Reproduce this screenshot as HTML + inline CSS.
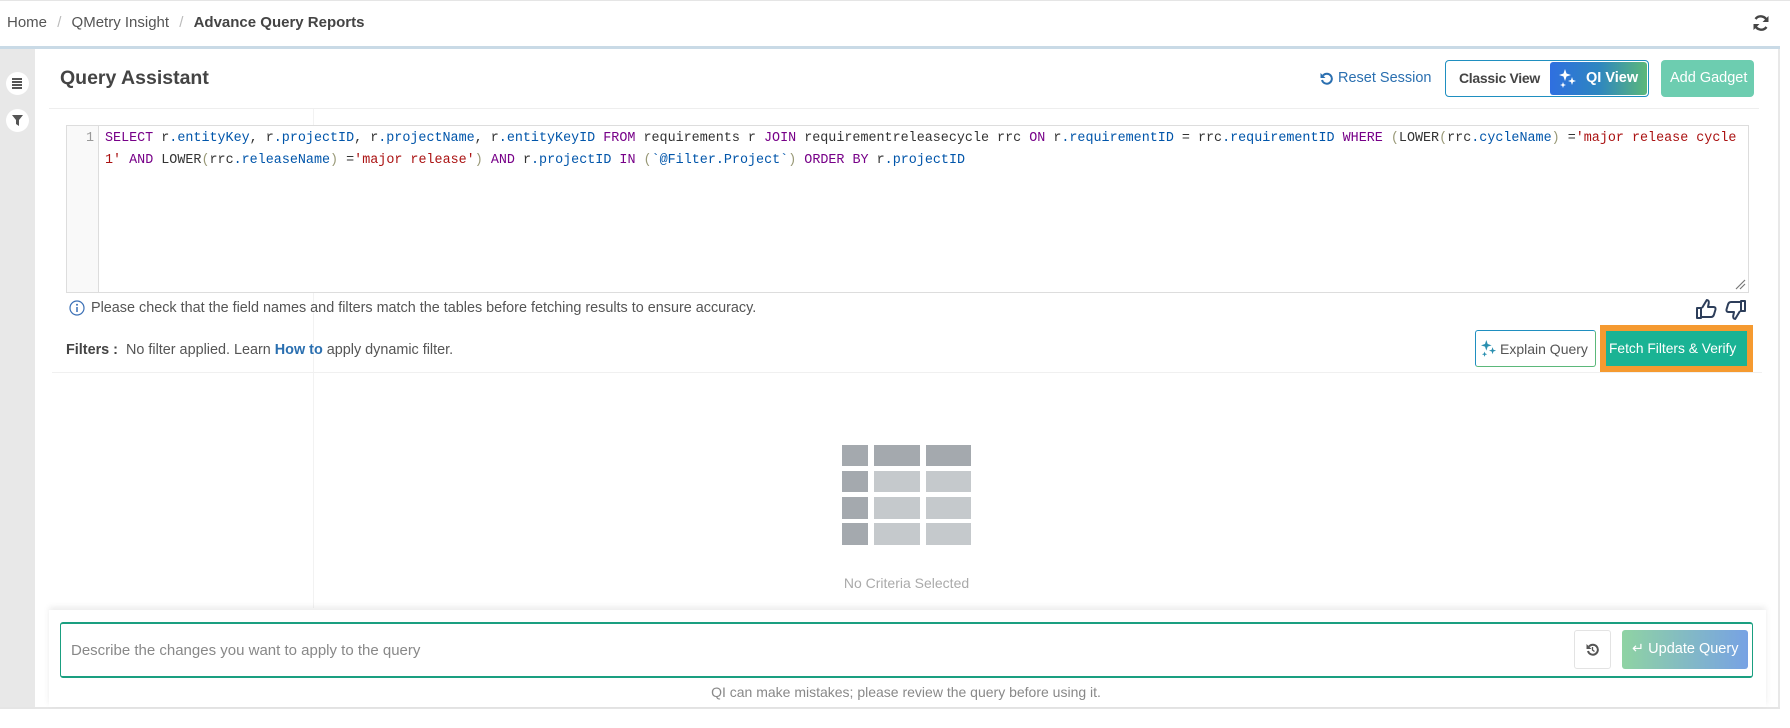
<!DOCTYPE html>
<html><head><meta charset="utf-8"><style>
*{box-sizing:border-box;margin:0;padding:0}
body{width:1790px;height:728px;background:#fff;font-family:"Liberation Sans",sans-serif;position:relative;overflow:hidden;color:#555}
.a{position:absolute}
.code{font-family:"Liberation Mono",monospace;font-size:13.4px;line-height:22px;color:#333;white-space:pre}
.k{color:#770088}.v{color:#0055aa}.s{color:#aa1111}.b{color:#999977}
.txt{font-size:14px;white-space:nowrap}
</style></head><body>
<div class="a" style="left:0;top:0;width:1790px;height:1px;background:#e5e5e5"></div>
<div class="a txt" style="left:7px;top:14px;font-size:15px;color:#555">Home <span style="color:#bbb;margin:0 6px">/</span> QMetry Insight <span style="color:#bbb;margin:0 6px">/</span> <b style="color:#444">Advance Query Reports</b></div>
<svg class="a" style="left:1752px;top:14px" width="18" height="18" viewBox="0 0 18 18"><path d="M15 7A6.5 6.5 0 0 0 3.5 5M3 11a6.5 6.5 0 0 0 11.5 2" fill="none" stroke="#444" stroke-width="2.4"/><path d="M16.5 2v6h-6zM1.5 16v-6h6z" fill="#444"/></svg>
<div class="a" style="left:0;top:46px;width:1780px;height:3px;background:#c9dae6"></div>
<div class="a" style="left:0;top:49px;width:35px;height:659px;background:#e8e8e8"></div>
<div class="a" style="left:6px;top:72px;width:23px;height:23px;border-radius:50%;background:#fff"></div>
<div class="a" style="left:12px;top:78px;width:10px;height:2px;background:#555;box-shadow:0 3px #555,0 6px #555,0 9px #555"></div>
<div class="a" style="left:6px;top:109px;width:23px;height:23px;border-radius:50%;background:#fff"></div>
<svg class="a" style="left:12px;top:115px" width="11" height="11" viewBox="0 0 11 11"><path d="M0 0h11L7 5v6L4 9V5z" fill="#555"/></svg>
<div class="a" style="left:1778px;top:49px;width:2px;height:659px;background:#e8e8e8"></div>
<div class="a" style="left:0;top:707px;width:1780px;height:2px;background:#e5e5e5"></div>
<div class="a" style="left:313px;top:108px;width:1px;height:500px;background:#f2f2f2"></div>
<div class="a" style="left:60px;top:67px;font-size:19.5px;font-weight:bold;color:#444">Query Assistant</div>
<div class="a" style="left:49px;top:108px;width:1710px;height:1px;background:#eee"></div>
<svg class="a" style="left:1320px;top:72px" width="13" height="13" viewBox="0 0 13 13"><path d="M3 3.5A5 5 0 1 1 2 8" fill="none" stroke="#2a6fb0" stroke-width="2"/><path d="M0.5 1v5h5z" fill="#2a6fb0"/></svg>
<div class="a txt" style="left:1338px;top:70px;color:#2a6fb0;font-size:14.5px">Reset Session</div>
<div class="a" style="left:1445px;top:60px;width:204px;height:37px;border:1.5px solid #1f8fc0;border-radius:4px;background:#fff"></div>
<div class="a txt" style="left:1459px;top:70px;color:#444;font-size:14px;font-weight:bold;letter-spacing:-0.3px">Classic View</div>
<div class="a" style="left:1550px;top:62px;width:97px;height:33px;border-radius:3px;background:linear-gradient(90deg,#2f6fe0,#2e86c0 50%,#5bb87a)"></div>
<svg class="a" style="left:1559px;top:68px" width="18" height="20" viewBox="0 0 18 20"><path d="M6 1l1.5 4.5L12 7 7.5 8.5 6 13 4.5 8.5 0 7l4.5-1.5zM13 9l1 3 3 1-3 1-1 3-1-3-3-1 3-1zM4 14l.8 2.2L7 17l-2.2.8L4 20l-.8-2.2L1 17l2.2-.8z" fill="#fff"/></svg>
<div class="a txt" style="left:1586px;top:70px;color:#fff;font-size:14.5px;font-weight:bold">QI View</div>
<div class="a" style="left:1661px;top:60px;width:93px;height:37px;border-radius:4px;background:#6dcdb0"></div>
<div class="a txt" style="left:1670px;top:70px;color:#fff;font-size:14.5px">Add Gadget</div>
<div class="a" style="left:66px;top:125px;width:1683px;height:168px;border:1px solid #ddd;background:#fff"></div>
<div class="a" style="left:67px;top:126px;width:32px;height:166px;background:#f9f9f9;border-right:1px solid #ddd"></div>
<div class="a code" style="left:86px;top:128px;color:#999">1</div>
<div class="a code" style="left:105px;top:128px"><span class="k">SELECT</span> r<span class="v">.entityKey</span>, r<span class="v">.projectID</span>, r<span class="v">.projectName</span>, r<span class="v">.entityKeyID</span> <span class="k">FROM</span> requirements r <span class="k">JOIN</span> requirementreleasecycle rrc <span class="k">ON</span> r<span class="v">.requirementID</span> = rrc<span class="v">.requirementID</span> <span class="k">WHERE</span> <span class="b">(</span>LOWER<span class="b">(</span>rrc<span class="v">.cycleName</span><span class="b">)</span> =<span class="s">'major release cycle</span>
<span class="s">1'</span> <span class="k">AND</span> LOWER<span class="b">(</span>rrc<span class="v">.releaseName</span><span class="b">)</span> =<span class="s">'major release'</span><span class="b">)</span> <span class="k">AND</span> r<span class="v">.projectID</span> <span class="k">IN</span> <span class="b">(</span><span class="v">`@Filter.Project`</span><span class="b">)</span> <span class="k">ORDER BY</span> r<span class="v">.projectID</span></div>
<svg class="a" style="left:1735px;top:279px" width="11" height="11" viewBox="0 0 11 11"><path d="M1 10L10 1M5 10l5-5" stroke="#777" stroke-width="1.2"/></svg>
<svg class="a" style="left:69px;top:300px" width="16" height="16" viewBox="0 0 16 16"><circle cx="8" cy="8" r="7" fill="none" stroke="#3a6fb5" stroke-width="1.2"/><circle cx="8" cy="4.8" r="1" fill="#3a6fb5"/><path d="M8 7v5" stroke="#3a6fb5" stroke-width="1.5"/></svg>
<div class="a txt" style="left:91px;top:300px;color:#555;font-size:14.4px">Please check that the field names and filters match the tables before fetching results to ensure accuracy.</div>
<svg class="a" style="left:1695px;top:299px" width="22" height="21" viewBox="0 0 22 21"><path d="M2 9h4v10H2zM6 18h10c1.5 0 2.5-1 3-2.5l1.5-5c.4-1.5-.5-2.5-2-2.5H13l.8-4c.3-1.5-.5-3-2-3L7 9" fill="none" stroke="#2d3e5a" stroke-width="2" stroke-linejoin="round"/></svg>
<svg class="a" style="left:1725px;top:299px" width="22" height="21" viewBox="0 0 22 21"><path d="M20 12h-4V2h4zM16 3H6C4.5 3 3.5 4 3 5.5l-1.5 5c-.4 1.5.5 2.5 2 2.5H9l-.8 4c-.3 1.5.5 3 2 3L15 12" fill="none" stroke="#2d3e5a" stroke-width="2" stroke-linejoin="round"/></svg>
<div class="a txt" style="left:66px;top:342px;color:#555;font-size:14.4px"><b style="color:#444">Filters :</b>&nbsp; No filter applied. Learn <b style="color:#2a6fb0">How to</b> apply dynamic filter.</div>
<div class="a" style="left:1475px;top:330px;width:121px;height:37px;border:1px solid;border-color:#1f8fc0 #5bb87a #5bb87a #1f8fc0;border-radius:3px;background:#fff"></div>
<svg class="a" style="left:1481px;top:339px" width="16" height="18" viewBox="0 0 18 20"><path d="M6 1l1.5 4.5L12 7 7.5 8.5 6 13 4.5 8.5 0 7l4.5-1.5zM13 9l1 3 3 1-3 1-1 3-1-3-3-1 3-1zM4 14l.8 2.2L7 17l-2.2.8L4 20l-.8-2.2L1 17l2.2-.8z" fill="#2a8fb0"/></svg>
<div class="a txt" style="left:1500px;top:341px;color:#555">Explain Query</div>
<div class="a" style="left:1600px;top:325px;width:153px;height:47px;background:#f59a30"></div>
<div class="a" style="left:1606px;top:331px;width:141px;height:35px;background:#1ab394"></div>
<div class="a txt" style="left:1609px;top:341px;color:#fff;font-size:13.8px">Fetch Filters &amp; Verify</div>
<div class="a" style="left:52px;top:372px;width:1710px;height:1px;background:#f0f0f0"></div>
<div class="a" style="left:842px;top:445px;width:26px;height:21px;background:#a4a9ae"></div>
<div class="a" style="left:874px;top:445px;width:46px;height:21px;background:#a4a9ae"></div>
<div class="a" style="left:926px;top:445px;width:45px;height:21px;background:#a4a9ae"></div>
<div class="a" style="left:842px;top:471px;width:26px;height:21px;background:#a4a9ae"></div>
<div class="a" style="left:874px;top:471px;width:46px;height:21px;background:#c5c9cc"></div>
<div class="a" style="left:926px;top:471px;width:45px;height:21px;background:#c5c9cc"></div>
<div class="a" style="left:842px;top:497px;width:26px;height:22px;background:#a4a9ae"></div>
<div class="a" style="left:874px;top:497px;width:46px;height:22px;background:#c5c9cc"></div>
<div class="a" style="left:926px;top:497px;width:45px;height:22px;background:#c5c9cc"></div>
<div class="a" style="left:842px;top:523px;width:26px;height:22px;background:#a4a9ae"></div>
<div class="a" style="left:874px;top:523px;width:46px;height:22px;background:#c5c9cc"></div>
<div class="a" style="left:926px;top:523px;width:45px;height:22px;background:#c5c9cc"></div>
<div class="a txt" style="left:800px;width:213px;text-align:center;top:575px;color:#aaa">No Criteria Selected</div>
<div class="a" style="left:49px;top:610px;width:1717px;height:97px;background:#fff;box-shadow:0 -3px 6px rgba(0,0,0,.08)"></div>
<div class="a" style="left:60px;top:622px;width:1693px;height:56px;border:1px solid #1a9f80;border-top-width:2px;border-bottom-width:2px;border-radius:3px;background:#fff"></div>
<div class="a txt" style="left:71px;top:642px;color:#888;font-size:15px">Describe the changes you want to apply to the query</div>
<div class="a" style="left:1574px;top:630px;width:37px;height:39px;border:1px solid #e3e3e3;border-radius:3px;background:#fff"></div>
<svg class="a" style="left:1586px;top:643px" width="13" height="13" viewBox="0 0 13 13"><path d="M3 3.5A5 5 0 1 1 2 8" fill="none" stroke="#555" stroke-width="2"/><path d="M0.5 1v5h5z" fill="#555"/><path d="M6.5 4v3l2 1.5" fill="none" stroke="#555" stroke-width="1.3"/></svg>
<div class="a" style="left:1622px;top:630px;width:126px;height:39px;border-radius:3px;background:linear-gradient(90deg,#8fd3a3,#77a2e4)"></div>
<div class="a txt" style="left:1632px;top:641px;color:#fff;font-size:14.5px">↵ Update Query</div>
<div class="a txt" style="left:700px;width:412px;text-align:center;top:684px;color:#888">QI can make mistakes; please review the query before using it.</div>
</body></html>
